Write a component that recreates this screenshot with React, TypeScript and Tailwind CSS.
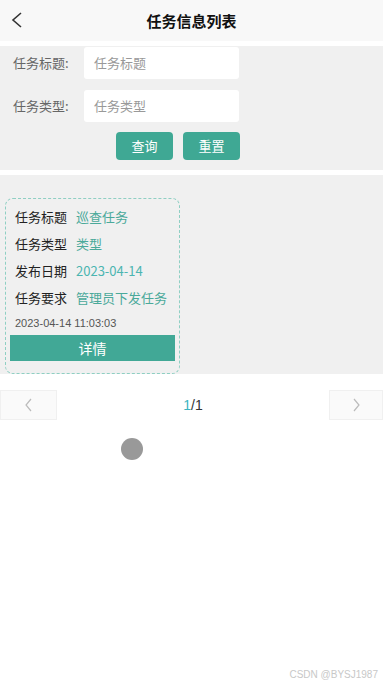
import React from "react";

const font = { fontFamily: '"Noto Sans CJK SC", "Liberation Sans", sans-serif' };

export default function App() {
  return (
    <div className="relative w-[383px] h-[687px] bg-white overflow-hidden" style={font}>
      {/* header */}
      <div className="relative h-[41px] bg-[#f8f8f8] flex items-center justify-center">
        <svg className="absolute left-[10px] top-[11px]" width="14" height="18" viewBox="0 0 14 18">
          <path d="M11 2 L3 9 L11 16" fill="none" stroke="#333" strokeWidth="1.6" />
        </svg>
        <span className="text-[15px] font-bold text-[#111] leading-none">任务信息列表</span>
      </div>
      <div className="h-[5px] bg-white" />
      {/* form */}
      <div className="h-[124px] bg-[#f0f0f0] pt-px">
        <div className="flex items-center h-[32px]">
          <span className="w-[84px] pl-[13px] text-[13px] text-[#666]">任务标题:</span>
          <div className="w-[155px] h-[32px] bg-white rounded-[3px] flex items-center pl-[10px] text-[13px] text-[#999]">任务标题</div>
        </div>
        <div className="flex items-center h-[32px] mt-[11px]">
          <span className="w-[84px] pl-[13px] text-[13px] text-[#666]">任务类型:</span>
          <div className="w-[155px] h-[32px] bg-white rounded-[3px] flex items-center pl-[10px] text-[13px] text-[#999]">任务类型</div>
        </div>
        <div className="flex mt-[10px] pl-[116px] gap-[10px]">
          <div className="w-[57px] h-[28px] bg-[#3fa894] rounded-[4px] flex items-center justify-center text-[13px] text-white">查询</div>
          <div className="w-[57px] h-[28px] bg-[#3fa894] rounded-[4px] flex items-center justify-center text-[13px] text-white">重置</div>
        </div>
      </div>
      <div className="h-[5px] bg-white" />
      {/* list */}
      <div className="h-[199px] bg-[#f0f0f0] pt-[23px] pl-[5px]">
        <div className="w-[175px] h-[176px] border border-dashed border-[#8fcfc3] rounded-[8px] pt-[4px] px-[4px]">
          {[
            ["任务标题", "巡查任务", "#4aa99a"],
            ["任务类型", "类型", "#4aa99a"],
            ["发布日期", "2023-04-14", "#4bb5b0"],
            ["任务要求", "管理员下发任务", "#4aa99a"],
          ].map(([k, v, c]) => (
            <div key={k} className="flex items-center h-[27px] pl-[5px] text-[13px]">
              <span className="w-[61px] text-[#222]">{k}</span>
              <span style={{ color: c }}>{v}</span>
            </div>
          ))}
          <div className="h-[24px] flex items-center pl-[5px] text-[11px] text-[#555]" style={{ fontFamily: '"Liberation Sans", sans-serif' }}>2023-04-14 11:03:03</div>
          <div className="h-[26px] bg-[#41a896] flex items-center justify-center text-[14px] text-white">详情</div>
        </div>
      </div>
      {/* pagination */}
      <div className="flex items-center justify-between mt-[16px] h-[30px]">
        <div className="w-[57px] h-[30px] bg-[#fafafa] border border-[#f0f0f0] flex items-center justify-center">
          <svg width="10" height="14" viewBox="0 0 10 14"><path d="M7 1 L2 7 L7 13" fill="none" stroke="#bbb" strokeWidth="1.2" /></svg>
        </div>
        <div className="text-[14px] text-[#333]" style={{ fontFamily: '"Liberation Sans", sans-serif' }}>
          <span className="text-[#3bb4c1]">1</span>/1
        </div>
        <div className="w-[54px] h-[30px] bg-[#fafafa] border border-[#f0f0f0] flex items-center justify-center">
          <svg width="10" height="14" viewBox="0 0 10 14"><path d="M3 1 L8 7 L3 13" fill="none" stroke="#bbb" strokeWidth="1.2" /></svg>
        </div>
      </div>
      {/* loading dot */}
      <div className="ml-[121px] mt-[18px] w-[22px] h-[22px] rounded-full bg-[#999] blur-[0.5px]" />
      <div className="absolute right-[5px] bottom-[5px] text-[10px] text-[#c8c8c8]" style={{ fontFamily: '"Liberation Sans", sans-serif' }}>CSDN @BYSJ1987</div>
    </div>
  );
}
